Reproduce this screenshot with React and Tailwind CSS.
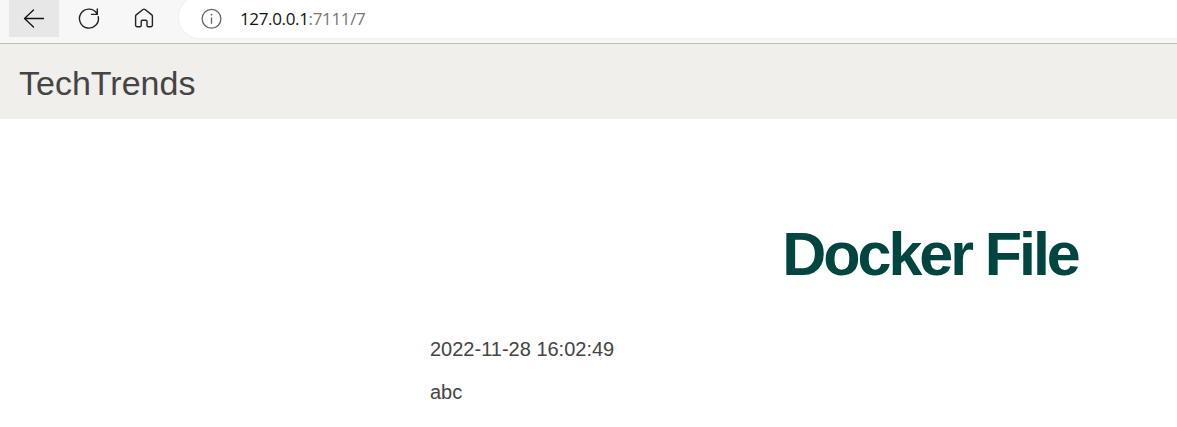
function BackIcon() {
  return (
    <svg className="block h-[38px] w-[50px]" viewBox="9 0 50 38" fill="none" stroke="#111" strokeWidth="1.3" strokeLinecap="round" strokeLinejoin="round">
      <path d="M43.5 18.5H24.5M33.5 10L24.5 18.5L33.5 27" />
    </svg>
  );
}

function ReloadIcon() {
  return (
    <svg className="block h-[38px] w-[30px]" viewBox="74 0 30 38" fill="none" stroke="#222" strokeWidth="1.4" strokeLinecap="round" strokeLinejoin="round">
      <path d="M98.3 16.8A9.5 9.5 0 1 1 96.5 12.8L97.3 14.4M97.3 9V14.4H91.5" />
    </svg>
  );
}

function HomeIcon() {
  return (
    <svg className="block h-[38px] w-[30px]" viewBox="129 0 30 38" fill="none" stroke="#222" strokeWidth="1.4" strokeLinejoin="round">
      <path d="M135.6 16.2Q135.6 15.4 136.2 14.9L143 9.5Q144 8.8 145 9.5L151.8 14.9Q152.4 15.4 152.4 16.2V25.3Q152.4 26.7 151 26.7H148.2Q147 26.7 147 25.5V21.5Q147 20.2 145.8 20.2H142.4Q141.2 20.2 141.2 21.5V25.5Q141.2 26.7 140 26.7H137Q135.6 26.7 135.6 25.3Z" />
    </svg>
  );
}

function InfoIcon() {
  return (
    <svg className="block h-[38px] w-[24px]" viewBox="200 0 24 38" fill="none" stroke="#666" strokeWidth="1.3">
      <circle cx="211.5" cy="18.8" r="9.4" />
      <path d="M211.5 17.4V23.8" />
      <circle cx="211.5" cy="14.6" r="0.9" fill="#666" stroke="none" />
    </svg>
  );
}

export default function App() {
  return (
    <div className="flex h-[427px] w-full flex-col overflow-hidden bg-white font-['Liberation_Sans',Arial,sans-serif] text-[#444]">
      <div className="flex h-[44px] shrink-0 items-start border-b border-[#bcbcbe] bg-[#f7f7f7] pl-[9px]">
        <div className="h-[37px] overflow-hidden bg-[#e7e7e7]">
          <BackIcon />
        </div>
        <div className="ml-[15px]"><ReloadIcon /></div>
        <div className="ml-[25px]"><HomeIcon /></div>
        <div className="-mt-1 ml-5 flex h-[42px] flex-1 items-start rounded-l-full bg-white pt-1 pl-[21px] shadow-[0_0_3px_#e8e8e8]">
          <InfoIcon />
          <div className="ml-4 font-['Open_Sans','Noto_Sans',sans-serif] text-[17px] leading-[38px] tracking-[-0.35px] whitespace-nowrap text-[#777]">
            <span className="text-[#111]">127.0.0.1</span>:7111/7
          </div>
        </div>
      </div>
      <header className="flex h-[75px] shrink-0 items-center bg-[#f0efeb] pt-0.5 pl-[19px]">
        <span className="text-[34px] leading-[40px]">TechTrends</span>
      </header>
      <main className="pl-[430px]">
        <h1 className="mt-[100px] w-[1000px] text-center text-[61px] leading-[70px] font-bold tracking-[-3.05px] text-[#00453f]">Docker File</h1>
        <p className="mt-[48px] text-[20px] leading-[24px]">2022-11-28 16:02:49</p>
        <p className="mt-[19px] text-[20px] leading-[24px]">abc</p>
      </main>
    </div>
  );
}
